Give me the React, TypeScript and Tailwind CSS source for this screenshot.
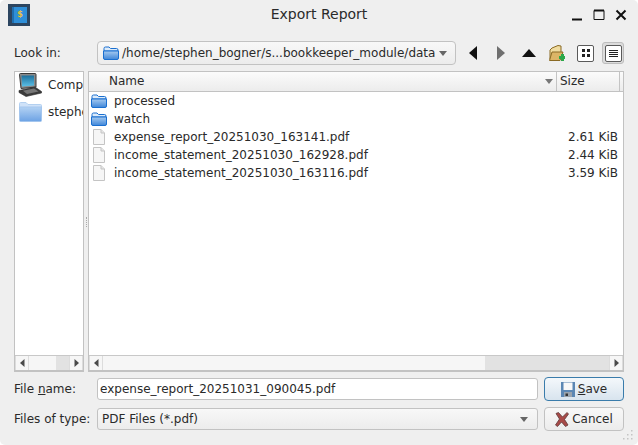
import type { ReactNode } from 'react'

function FolderIcon({ size = 16 }: { size?: number }) {
  return (
    <svg width={size} height={size} viewBox="0 0 16 16" className="shrink-0">
      <defs>
        <linearGradient id="fd" x1="0" y1="0" x2="0" y2="1">
          <stop offset="0" stopColor="#a6caf0" />
          <stop offset="1" stopColor="#3f86d8" />
        </linearGradient>
      </defs>
      <path d="M1 3.5 Q1 2 2.5 2 H6 L7.5 3.5 H13.5 Q15 3.5 15 5 V6 H1 Z" fill="#dcebfa" stroke="#1a6fd0" />
      <path d="M0.5 6 H15.5 V13 Q15.5 14.5 14 14.5 H2 Q0.5 14.5 0.5 13 Z" fill="url(#fd)" stroke="#1a6fd0" />
    </svg>
  )
}

function PlaceFolderIcon() {
  return (
    <svg width="23" height="20" viewBox="0 0 23 20" className="shrink-0">
      <defs>
        <linearGradient id="fp" x1="0" y1="0" x2="0" y2="1">
          <stop offset="0" stopColor="#b3d2f3" />
          <stop offset="1" stopColor="#6ca2e4" />
        </linearGradient>
      </defs>
      <path d="M0.5 1.5 Q0.5 0.5 1.5 0.5 H7 L9 2.5 H21.5 Q22.5 2.5 22.5 3.5 V6 H0.5 Z" fill="#cfe2f8" stroke="#b3d0f0" />
      <path d="M0.5 5 H22.5 V18.5 Q22.5 19.5 21.5 19.5 H1.5 Q0.5 19.5 0.5 18.5 Z" fill="url(#fp)" stroke="#a4c6ee" />
    </svg>
  )
}

function FileIcon() {
  return (
    <svg width="16" height="16" viewBox="0 0 16 16" className="shrink-0">
      <path d="M2.5 0.5 H10 L13.5 4 V15.5 H2.5 Z" fill="#f6f6f6" stroke="#c4c4c4" />
      <path d="M10 0.5 V4 H13.5" fill="#e6e6e6" stroke="#c4c4c4" />
    </svg>
  )
}

function ComputerIcon() {
  return (
    <svg width="24" height="24" viewBox="0 0 24 24" className="shrink-0">
      <defs>
        <linearGradient id="scr" x1="0" y1="0" x2="0" y2="1">
          <stop offset="0" stopColor="#1c6f9c" />
          <stop offset="1" stopColor="#5cc0e6" />
        </linearGradient>
      </defs>
      <path d="M1.5 1.5 Q1.5 0.5 2.5 0.5 H17 Q18 0.5 18 1.5 V14 L3 15.5 Z" fill="#8a8a8a" stroke="#3a3a3a" />
      <path d="M3.5 2.5 H16 V12.5 L4 13.5 Z" fill="url(#scr)" />
      <path d="M1 17.5 L17 14 L23.5 18.5 V20 L8 23.5 L1 19.5 Z" fill="#3c3c3c" stroke="#2a2a2a" strokeWidth="0.6" />
      <path d="M5 17.8 L16 15.5 L20.5 18.4 L9 21 Z" fill="#777" />
    </svg>
  )
}

function HeaderCell({ children, className }: { children: ReactNode; className: string }) {
  return <div className={`flex items-center border-r border-[#c4c4c4] pb-px ${className}`}>{children}</div>
}

function Arrow({ dir }: { dir: 'left' | 'right' }) {
  return (
    <div className="flex h-[14px] w-[14px] shrink-0 items-center justify-center border-x border-[#dcdcdc] bg-[#f6f6f6]">
      <svg width="5" height="8" viewBox="0 0 5 8">
        <path d={dir === 'left' ? 'M4.5 0 V8 L0 4 Z' : 'M0.5 0 V8 L5 4 Z'} fill="#4a4a4a" />
      </svg>
    </div>
  )
}

const files = [
  { name: 'expense_report_20251030_163141.pdf', size: '2.61 KiB' },
  { name: 'income_statement_20251030_162928.pdf', size: '2.44 KiB' },
  { name: 'income_statement_20251030_163116.pdf', size: '3.59 KiB' },
]

export default function App() {
  return (
    <div className="relative flex h-[445px] w-[638px] flex-col overflow-hidden rounded-[5px] bg-[#efefef] text-[12px] leading-none text-[#2a2a2a] [font-family:'DejaVu_Sans',sans-serif]">
      {/* title bar */}
      <div className="flex h-[33px] shrink-0 items-start pl-2 pr-[11px] pt-[4px]">
        <div className="flex h-[22px] w-[22px] items-center justify-center bg-[#2c4560]">
          <div className="relative flex h-[16px] w-[15px] items-center justify-center border-l-2 border-[#1f6fb0] bg-[#2f8fd8] text-[8px] font-bold text-[#e8c33a]">$</div>
        </div>
        <div className="flex-1 pl-[37px] pt-[3px] text-center text-[14px] text-[#2a2a2a]">Export Report</div>
        <div className="flex items-center gap-[10px] pt-[5px]">
          <svg width="12" height="12" viewBox="0 0 12 12"><path d="M1 10.5 H11" stroke="#111" strokeWidth="2" /></svg>
          <svg width="12" height="12" viewBox="0 0 12 12"><path d="M1 1.5 H11 V10.5 H1 Z" fill="none" stroke="#111" strokeWidth="1" /><path d="M1 1.5 H11" stroke="#111" strokeWidth="2" /></svg>
          <svg width="12" height="12" viewBox="0 0 12 12"><path d="M1.5 1.5 L10.5 10.5 M10.5 1.5 L1.5 10.5" stroke="#111" strokeWidth="2" /></svg>
        </div>
      </div>

      {/* look in row */}
      <div className="mt-[8px] flex h-[24px] shrink-0 items-center pl-[14px]">
        <div className="w-[83px]">Look in:</div>
        <div className="flex h-[24px] w-[359px] items-center rounded-[4px] border border-[#c2c2c2] bg-gradient-to-b from-[#f8f8f8] to-[#ececec] pl-[5px] pr-[8px]">
          <FolderIcon />
          <span className="ml-[3px] flex-1 whitespace-nowrap">/home/stephen_bogner/s...bookkeeper_module/data</span>
          <svg width="8" height="5" viewBox="0 0 8 5"><path d="M0 0 H8 L4 5 Z" fill="#666" /></svg>
        </div>
        <div className="ml-[13px] flex items-center">
          <svg width="8" height="14" viewBox="0 0 8 14"><path d="M8 0 V14 L0 7 Z" fill="#111" /></svg>
          <svg className="ml-[20px]" width="8" height="14" viewBox="0 0 8 14"><path d="M0 0 V14 L8 7 Z" fill="#6f6f6f" /></svg>
          <svg className="ml-[17px]" width="14" height="8" viewBox="0 0 14 8"><path d="M0 8 H14 L7 0 Z" fill="#111" /></svg>
          <svg className="ml-[13px]" width="16" height="17" viewBox="0 0 16 17">
            <path d="M1 14 V5 L3 3 L9 0.5 L12 1 V7 L6 15 Z" fill="#f0dca0" stroke="#8a6a24" />
            <path d="M0.5 15.5 L3 7 H14 L11 15.5 Z" fill="#dcb566" stroke="#8a6a24" />
            <path d="M10 11 H12 V9 H15 V11 H16 V14 H15 V16 H12 V14 H10 Z" fill="#2ca84a" />
          </svg>
          <div className="ml-[12px] flex h-[17px] w-[17px] flex-wrap content-center justify-center gap-[2px] rounded-[2px] border border-[#5a5a5a] bg-white px-[3px]">
            <span className="h-[3px] w-[3px] bg-[#222]" />
            <span className="h-[3px] w-[3px] bg-[#222]" />
            <span className="h-[3px] w-[3px] bg-[#222]" />
            <span className="h-[3px] w-[3px] bg-[#222]" />
          </div>
          <div className="ml-[8px] flex h-[22px] w-[22px] items-center justify-center rounded-[3px] border border-[#bdbdbd] bg-[#dcdcdc]">
            <div className="flex h-[17px] w-[17px] flex-col items-center justify-center gap-[1px] rounded-[2px] border border-[#5a5a5a] bg-white">
              <span className="h-px w-[9px] bg-[#222]" />
              <span className="h-px w-[9px] bg-[#222]" />
              <span className="h-px w-[9px] bg-[#222]" />
              <span className="h-px w-[9px] bg-[#222]" />
            </div>
          </div>
        </div>
      </div>

      {/* panels */}
      <div className="mt-[6px] flex h-[301px] shrink-0 px-[14px]">
        <div className="flex w-[70px] flex-col border border-[#c2c2c2] border-b-2 bg-white">
          <div className="flex-1 overflow-hidden">
            <div className="flex h-[25px] items-center pl-[3px] pt-[1px]">
              <ComputerIcon />
              <span className="ml-[6px]">Computer</span>
            </div>
            <div className="flex h-[27px] items-center pl-[4px] pt-[2px]">
              <PlaceFolderIcon />
              <span className="ml-[6px] whitespace-nowrap">stephen_bogner</span>
            </div>
          </div>
          <div className="flex h-[15px] shrink-0 items-center border-t border-[#c8c8c8] bg-[#f6f6f6]">
            <Arrow dir="left" />
            <div className="flex-1" />
            <div className="h-[14px] w-[13px] bg-[#e2e2e2]" />
            <Arrow dir="right" />
          </div>
        </div>

        <div className="flex w-[4px] items-center justify-center">
          <div className="h-[10px] w-px border-l border-dotted border-[#aaa]" />
        </div>

        <div className="flex flex-1 flex-col border border-[#c2c2c2] border-b-2 bg-white">
          <div className="flex h-[20px] shrink-0 border-b border-[#c2c2c2] bg-gradient-to-b from-[#fbfbfb] to-[#ececec]">
            <HeaderCell className="w-[468px] justify-between pl-[20px] pr-[3px]">
              <span>Name</span>
              <svg width="8" height="5" viewBox="0 0 8 5"><path d="M0 0 H8 L4 5 Z" fill="#777" /></svg>
            </HeaderCell>
            <HeaderCell className="w-[63px] pl-[3px]">Size</HeaderCell>
          </div>
          <div className="flex-1 overflow-hidden">
            <div className="flex h-[18px] items-center pl-[2px]">
              <FolderIcon />
              <span className="ml-[7px]">processed</span>
            </div>
            <div className="flex h-[18px] items-center pl-[2px]">
              <FolderIcon />
              <span className="ml-[7px]">watch</span>
            </div>
            {files.map((f) => (
              <div key={f.name} className="flex h-[18px] items-center pl-[2px] pr-[5px]">
                <FileIcon />
                <span className="ml-[7px] flex-1">{f.name}</span>
                <span>{f.size}</span>
              </div>
            ))}
          </div>
          <div className="flex h-[15px] shrink-0 items-center border-t border-[#c8c8c8] bg-[#f6f6f6]">
            <Arrow dir="left" />
            <div className="h-[14px] w-[382px] bg-[#f6f6f6]" />
            <div className="h-[14px] flex-1 bg-[#e2e2e2]" />
            <Arrow dir="right" />
          </div>
        </div>
      </div>

      {/* file name */}
      <div className="mt-[5px] flex h-[24px] shrink-0 items-center pl-[14px] pr-[14px]">
        <div className="w-[83px]">File <span className="underline">n</span>ame:</div>
        <div className="flex h-[22px] w-[441px] items-center rounded-[3px] border border-[#c2c2c2] bg-white pl-[2px]">
          expense_report_20251031_090045.pdf
        </div>
        <button className="ml-[6px] flex h-[24px] w-[80px] items-center justify-center rounded-[4px] border border-[#3a7cab] bg-gradient-to-b from-[#f4f8fb] to-[#d8e4ee]">
          <svg width="14" height="15" viewBox="0 0 14 15" className="mr-[3px]">
            <path d="M0 0 H14 V15 H0 Z" fill="#5b87b4" />
            <path d="M2.5 0.5 H11.5 V8 H2.5 Z" fill="#f8f8f8" />
            <path d="M3 10 H11 V15 H3 Z" fill="#9aa4ae" />
            <path d="M4.5 11.5 H7 V14 H4.5 Z" fill="#333" />
          </svg>
          <span><span className="underline">S</span>ave</span>
        </button>
      </div>

      {/* files of type */}
      <div className="mt-[6px] flex h-[24px] shrink-0 items-center pl-[14px] pr-[14px]">
        <div className="w-[83px]">Files of type:</div>
        <div className="flex h-[22px] w-[441px] items-center justify-between rounded-[3px] border border-[#c2c2c2] bg-gradient-to-b from-[#f8f8f8] to-[#ececec] pl-[4px] pr-[9px]">
          <span>PDF Files (*.pdf)</span>
          <svg width="8" height="5" viewBox="0 0 8 5"><path d="M0 0 H8 L4 5 Z" fill="#666" /></svg>
        </div>
        <button className="ml-[6px] flex h-[24px] w-[80px] items-center justify-center rounded-[4px] border border-[#c2c2c2] bg-gradient-to-b from-[#f8f8f8] to-[#ececec]">
          <svg width="14" height="15" viewBox="0 0 14 15" className="mr-[3px]">
            <path d="M1 1.5 L3.5 0.5 L7.5 5 L12 0.5 L13.5 2 L9.5 7.5 L13 13 L10.5 14.5 L6.5 10 L2.5 14.5 L0.5 13 L4.5 7 Z" fill="#a84a48" stroke="#5e3a3a" strokeWidth="0.8" />
          </svg>
          <span>Cancel</span>
        </button>
      </div>

      {/* size grip */}
      <svg className="absolute bottom-[4px] right-[4px]" width="12" height="12" viewBox="0 0 12 12">
        <g fill="#c4c4c4">
          <rect x="9" y="1" width="1.5" height="1.5" />
          <rect x="5" y="5" width="1.5" height="1.5" />
          <rect x="9" y="5" width="1.5" height="1.5" />
          <rect x="1" y="9" width="1.5" height="1.5" />
          <rect x="5" y="9" width="1.5" height="1.5" />
          <rect x="9" y="9" width="1.5" height="1.5" />
        </g>
      </svg>
    </div>
  )
}
